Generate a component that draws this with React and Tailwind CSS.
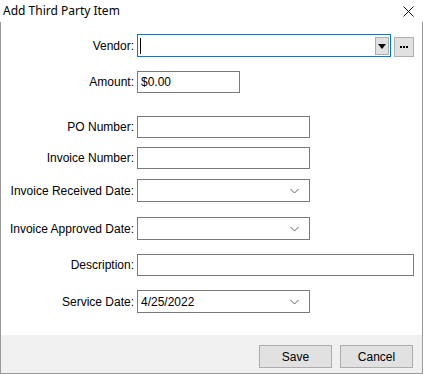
import React from "react";

const Chevron = () => (
  <svg width="9" height="5" viewBox="0 0 9 5" className="absolute right-[10px] top-1/2 -translate-y-1/2">
    <path d="M0.5 0.5 L4.5 4.5 L8.5 0.5" fill="none" stroke="#606060" strokeWidth="1" />
  </svg>
);

const Row = ({ label, mt, children }) => (
  <div className={`flex items-center ${mt}`}>
    <div className="w-[134px] pr-[1px] text-right text-[12px] text-black">{label}</div>
    <div className="ml-[2px] flex items-center">{children}</div>
  </div>
);

const TextBox = ({ w, value }) => (
  <div className={`${w} h-[22px] border border-[#7a7a7a] bg-white pl-[3px] flex items-center text-[12px]`}>
    {value}
  </div>
);

const DateBox = ({ value }) => (
  <div className="relative w-[173px] h-[23px] border border-[#7a7a7a] bg-white pl-[3px] flex items-center text-[12px]">
    {value}
    <Chevron />
  </div>
);

export default function App() {
  return (
    <div className="w-[423px] h-[374px] bg-white font-['Liberation_Sans',Arial,sans-serif] text-black select-none">
      <div className="h-[22px] flex items-center justify-between pl-[3px] pr-[9px]">
        <span className="text-[12px] font-['Noto_Sans',sans-serif] leading-none">Add Third Party Item</span>
        <svg width="11" height="11" viewBox="0 0 11 11">
          <path d="M0.5 0.5 L10.5 10.5 M10.5 0.5 L0.5 10.5" stroke="#111" strokeWidth="1" />
        </svg>
      </div>
      <div className="h-[352px] border-x border-b border-[#999] flex flex-col">
        <div className="flex-1">
          <Row label="Vendor:" mt="mt-[12px]">
            <div className="relative w-[254px] h-[23px] border border-[#0078d7] bg-white flex items-center">
              <div className="ml-[2px] w-px h-[16px] bg-black" />
              <div className="absolute right-[1px] top-[2px] w-[14px] h-[18px] bg-[#e1e1e1] border border-[#adadad] flex items-center justify-center">
                <svg width="8" height="5" viewBox="0 0 8 5">
                  <path d="M0 0 L8 0 L4 5 Z" fill="#000" />
                </svg>
              </div>
            </div>
            <div className="ml-[3px] w-[20px] h-[20px] mt-[2px] bg-[#e1e1e1] border border-[#adadad] flex items-center justify-center">
              <svg width="8" height="2" viewBox="0 0 8 2">
                <rect x="0" y="0" width="2" height="2" fill="#000" />
                <rect x="3" y="0" width="2" height="2" fill="#000" />
                <rect x="6" y="0" width="2" height="2" fill="#000" />
              </svg>
            </div>
          </Row>
          <Row label="Amount:" mt="mt-[14px]">
            <TextBox w="w-[103px]" value="$0.00" />
          </Row>
          <Row label="PO Number:" mt="mt-[23px]">
            <TextBox w="w-[173px]" />
          </Row>
          <Row label="Invoice Number:" mt="mt-[9px]">
            <TextBox w="w-[173px]" />
          </Row>
          <Row label="Invoice Received Date:" mt="mt-[10px]">
            <DateBox />
          </Row>
          <Row label="Invoice Approved Date:" mt="mt-[15px]">
            <DateBox />
          </Row>
          <Row label="Description:" mt="mt-[14px]">
            <TextBox w="w-[277px]" />
          </Row>
          <Row label="Service Date:" mt="mt-[14px]">
            <DateBox value="4/25/2022" />
          </Row>
        </div>
        <div className="h-[38px] bg-[#f0f0f0] flex items-start justify-end gap-[8px] pt-[10px] pr-[9px]">
          <button className="w-[73px] h-[23px] bg-[#e1e1e1] border border-[#adadad] text-[12px]">Save</button>
          <button className="w-[73px] h-[23px] bg-[#e1e1e1] border border-[#adadad] text-[12px]">Cancel</button>
        </div>
      </div>
    </div>
  );
}
